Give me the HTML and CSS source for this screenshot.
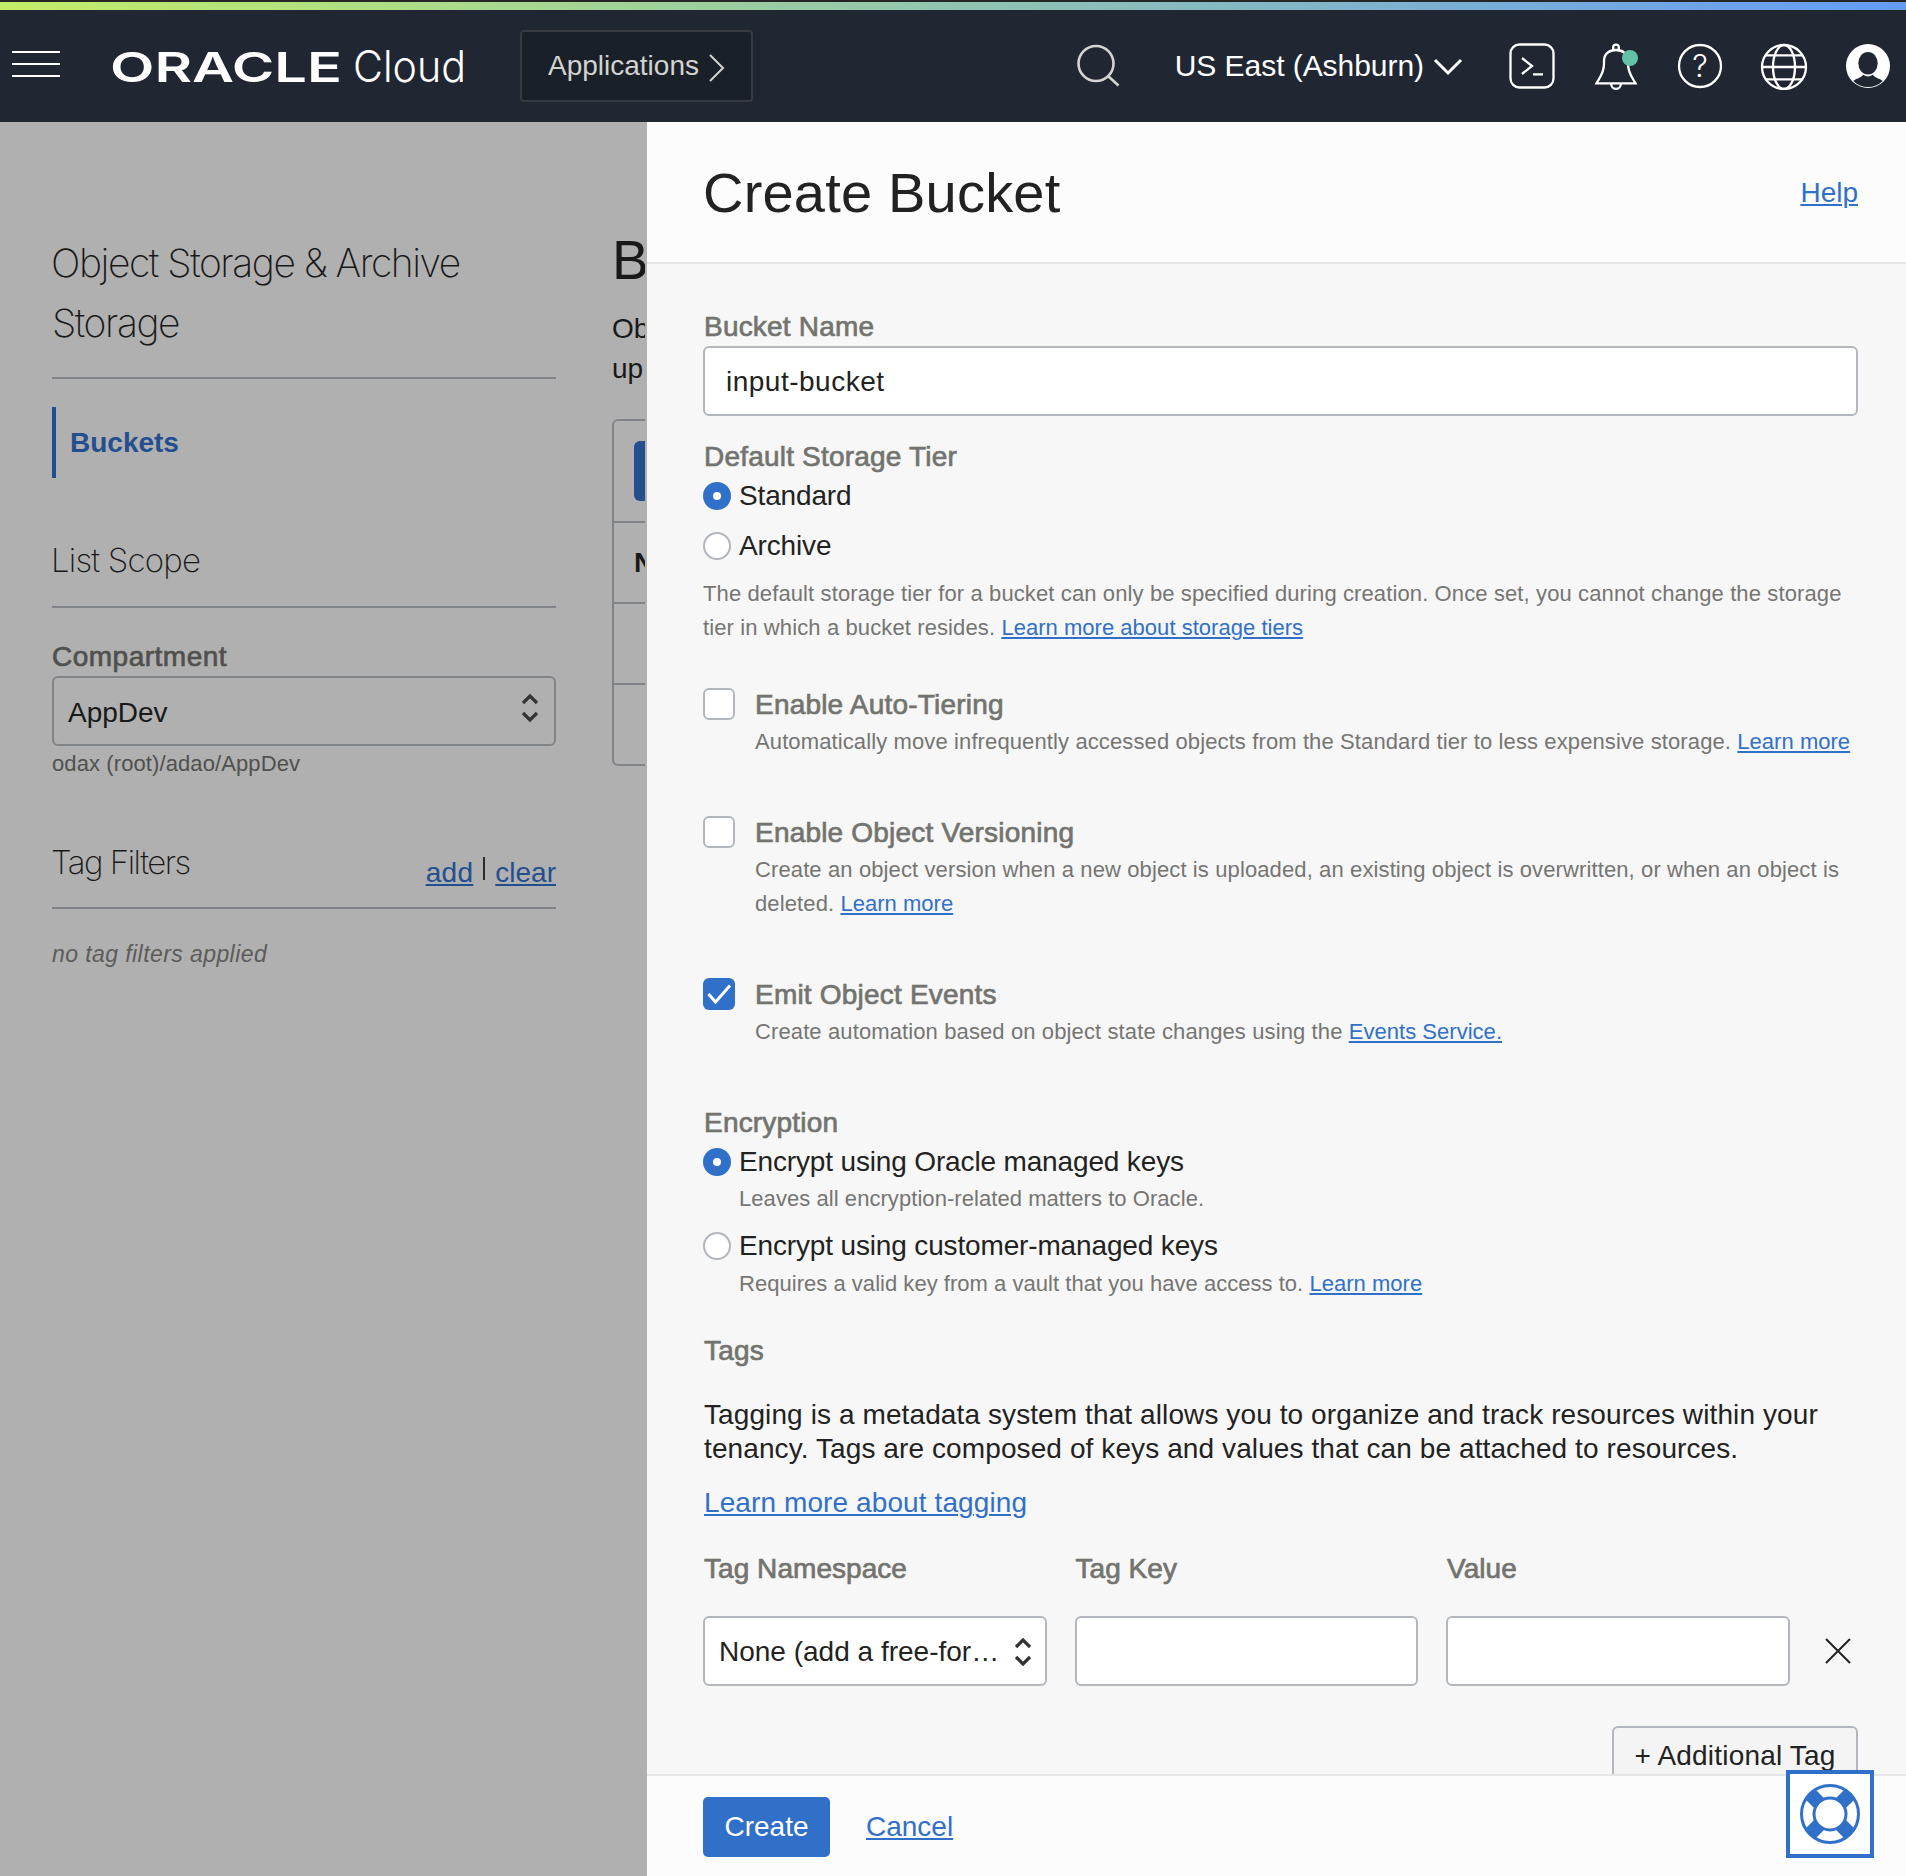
FILE: index.html
```html
<!DOCTYPE html>
<html lang="en">
<head>
<meta charset="utf-8">
<title>Create Bucket</title>
<link rel="stylesheet" href="styles.css">
</head>
<body>
<header class="topbar">
  <svg class="menu" width="48" height="48" viewBox="0 0 48 48"><path d="M0 10h48M0 22h48M0 34h48"/></svg>
  <svg class="logo" width="356" height="48" viewBox="0 0 356 48">
    <text class="logo-oracle" x="-2" y="40" textLength="232" lengthAdjust="spacingAndGlyphs">ORACLE</text>
    <text class="logo-cloud" x="241" y="40" textLength="113" lengthAdjust="spacingAndGlyphs">Cloud</text>
  </svg>
  <button class="apps">Applications<svg width="17" height="30" viewBox="0 0 17 30"><path d="M2 2l13 13L2 28"/></svg></button>
  <div class="tools">
    <svg class="search" width="44" height="48" viewBox="0 0 44 48"><circle cx="19" cy="21.500" r="17.500"/><path d="M31 34l10.500 9.500"/></svg>
    <span class="region">US East (Ashburn)<svg width="30" height="20" viewBox="0 0 30 20"><path d="M2 4l13 13L28 4"/></svg></span>
    <div class="icons">
      <svg width="48" height="48" viewBox="0 0 48 48"><rect x="2.500" y="2.500" width="43" height="43" rx="9"/><path d="M14 16l10 8-10 8M25 32.300h10"/></svg>
      <svg width="48" height="48" viewBox="0 0 48 48"><path d="M4.500 41.300C8 35 12 31 12 22v-3C12 12 17 8 24 8s12 4 12 11v3c0 9 4 13 7.500 19.300zM21.200 8V5.500a2.800 2.800 0 0 1 5.600 0V8M19.200 42a4.800 5 0 0 0 9.600 0"/><circle class="dot" cx="38" cy="16" r="8"/></svg>
      <svg width="48" height="48" viewBox="0 0 48 48"><circle cx="24" cy="24" r="21"/><text class="mark" x="24" y="34.500" text-anchor="middle">?</text></svg>
      <svg width="48" height="48" viewBox="0 0 48 48"><circle cx="24" cy="25" r="22"/><ellipse cx="24" cy="25" rx="11" ry="22"/><path d="M5.500 13.300h37M2 25h44M5.500 37.300h37"/></svg>
      <svg width="48" height="48" viewBox="0 0 48 48"><circle class="face" cx="24" cy="24" r="22"/><ellipse class="cut" cx="24" cy="21.300" rx="9.700" ry="11.300"/><path class="cut" d="M19 32.600c-.5 3-6 3.600-9.700 6.300a20.700 20.700 0 0 0 29.400 0c-3.700-2.700-9.200-3.300-9.700-6.300-2.500 2.400-7.500 2.400-10 0z"/></svg>
    </div>
  </div>
</header>
<main class="page">
  <aside class="sidebar">
    <h2 class="service">Object Storage &amp; Archive Storage</h2>
    <a class="nav-item">Buckets</a>
    <div class="side-head scope"><h3>List Scope</h3></div>
    <label class="label">Compartment</label>
    <div class="field select compartment"><span>AppDev</span><svg width="18" height="30" viewBox="0 0 18 30"><path d="M2 10L9 3l7 7M2 20l7 7 7-7"/></svg></div>
    <p class="hint">odax (root)/adao/AppDev</p>
    <div class="side-head filters"><h3>Tag Filters</h3><div class="side-links"><a class="link">add</a><i class="bar"></i><a class="link">clear</a></div></div>
    <p class="none">no tag filters applied</p>
  </aside>
  <section class="listing">
    <h1>B</h1>
    <p>Ob<br>up</p>
    <div class="table">
      <div class="trow actions"><span class="table-btn"></span></div>
      <div class="trow thead">N</div>
      <div class="trow"></div>
      <div class="trow"></div>
    </div>
  </section>
  <section class="panel">
    <div class="panel-head"><h1>Create Bucket</h1><a class="link">Help</a></div>
    <div class="panel-body">
      <label class="label">Bucket Name</label>
      <div class="field name">input-bucket</div>

      <div class="label tier">Default Storage Tier</div>
      <div class="option"><span class="radio on"></span>Standard</div>
      <div class="option archive"><span class="radio"></span>Archive</div>
      <p class="help tier-help">The default storage tier for a bucket can only be specified during creation. Once set, you cannot change the storage<br>tier in which a bucket resides. <a class="link">Learn more about storage tiers</a></p>

      <div class="check first"><span class="box"></span><div><div class="label">Enable Auto-Tiering</div><p class="help">Automatically move infrequently accessed objects from the Standard tier to less expensive storage. <a class="link">Learn more</a></p></div></div>
      <div class="check"><span class="box"></span><div><div class="label">Enable Object Versioning</div><p class="help">Create an object version when a new object is uploaded, an existing object is overwritten, or when an object is<br>deleted. <a class="link">Learn more</a></p></div></div>
      <div class="check"><span class="box on"><svg width="26" height="24" viewBox="0 0 26 24"><path d="M2.500 12l7 8L24 3.500"/></svg></span><div><div class="label">Emit Object Events</div><p class="help">Create automation based on object state changes using the <a class="link">Events Service.</a></p></div></div>

      <div class="label encryption">Encryption</div>
      <div class="option"><span class="radio on"></span>Encrypt using Oracle managed keys</div>
      <p class="help sub">Leaves all encryption-related matters to Oracle.</p>
      <div class="option customer"><span class="radio"></span>Encrypt using customer-managed keys</div>
      <p class="help sub second">Requires a valid key from a vault that you have access to. <a class="link">Learn more</a></p>

      <div class="label tags">Tags</div>
      <p class="about">Tagging is a metadata system that allows you to organize and track resources within your<br>tenancy. Tags are composed of keys and values that can be attached to resources.</p>
      <div class="more"><a class="link">Learn more about tagging</a></div>
      <div class="tag-grid">
        <div class="label">Tag Namespace</div><div class="label">Tag Key</div><div class="label">Value</div><span></span>
        <div class="field select"><span>None (add a free-for…</span><svg width="18" height="30" viewBox="0 0 18 30"><path d="M2 10L9 3l7 7M2 20l7 7 7-7"/></svg></div>
        <div class="field"></div>
        <div class="field"></div>
        <svg class="remove" width="26" height="26" viewBox="0 0 26 26"><path d="M1 1l24 24M25 1L1 25"/></svg>
      </div>
      <button class="add-tag">+ Additional Tag</button>
    </div>
    <div class="panel-foot"><button class="create">Create</button><a class="link">Cancel</a></div>
  </section>
</main>
<div class="support"><svg width="64" height="64" viewBox="0 0 64 64"><path class="bands" d="M21.500 21.500l-9-9M42.500 21.500l9-9M21.500 42.500l-9 9M42.500 42.500l9 9"/><circle cx="32" cy="32" r="28.500"/><circle class="hole" cx="32" cy="32" r="16"/></svg></div>
</body>
</html>
```
FILE: styles.css
```css
* { box-sizing: border-box; margin: 0; padding: 0; }
body {
  width: 1906px; height: 1876px; overflow: hidden;
  display: flex; flex-direction: column;
  font: 400 28px/34px "Liberation Sans", Arial, sans-serif;
  color: #222; background: #b0b0b0;
}
svg { display: block; flex: none; fill: none; }
button { font: inherit; }
.link { color: #3170c9; text-decoration: underline; text-decoration-thickness: 2px; text-underline-offset: 2px; }

/* top bar */
.topbar {
  flex: none; height: 122px; padding: 10px 14px 0 12px;
  display: flex; align-items: center;
  background:
    linear-gradient(#262626, #262626) 0 0 / 100% 2px no-repeat,
    linear-gradient(90deg, #c2ee68 0%, #98cba5 42%, #7db2cf 73%, #659cf8 100%) 0 2px / 100% 8px no-repeat,
    #202732;
  color: #fff;
}
.menu path { stroke: #fff; stroke-width: 2; }
.logo { margin-left: 52px; overflow: visible; }
.logo text { fill: #fff; }
.logo-oracle { font: 600 41px Inter, sans-serif; }
.logo-cloud { font: 300 43px Inter, sans-serif; }
.apps {
  margin-left: 52px; width: 233px; height: 72px; padding-left: 26px;
  display: flex; align-items: center; gap: 9px;
  color: #d3d3d2; background: #1a2027; border: 2px solid #373b41; border-radius: 4px;
}
.apps svg { margin-top: 4px; }
.apps svg path { stroke: #d3d3d2; stroke-width: 2; }
.tools { margin-left: auto; display: flex; align-items: center; }
.search { stroke: #d5d5d0; stroke-width: 2.6; }
.region { margin-left: 54px; display: flex; align-items: center; gap: 9px; font-size: 30px; letter-spacing: -0.05px; }
.region svg path { stroke: #fff; stroke-width: 3; }
.icons { margin-left: 45px; display: flex; gap: 36px; stroke: #fff; stroke-width: 2.3; }
.dot { fill: #63c1a8; stroke: none; }
.mark { font: 300 31px Inter, sans-serif; fill: #fff; stroke: none; }
.face { fill: #fff; stroke: none; }
.cut { fill: #202732; stroke: none; }

/* dimmed page */
.page { flex: 1; min-height: 0; display: flex; }
.sidebar { flex: none; width: 556px; padding: 111px 0 0 52px; color: #191919; }
.sidebar .link { color: #234f8f; }
.service { font: 200 39px/60px Inter, sans-serif; letter-spacing: -1.45px; padding-bottom: 24px; border-bottom: 2px solid #808489; text-indent: -1px; }
.nav-item {
  margin-top: 28px; height: 71px; display: flex; align-items: center;
  border-left: 4px solid #234f8f; padding: 1px 0 0 14px; color: #234f8f; font-weight: 700;
}
.side-head { display: flex; justify-content: space-between; border-bottom: 2px solid #808489; }
.side-head h3 { font: 200 33px/50px Inter, sans-serif; letter-spacing: -0.8px; text-indent: -1px; }
.scope { margin-top: 57px; height: 73px; }
.filters { margin-top: 56px; height: 72px; }
.filters h3 { letter-spacing: -1.5px; }
.side-links { display: flex; padding-top: 19px; }
.side-links .link:first-child { letter-spacing: .3px; }
.bar { width: 2px; height: 23px; margin: 1px 10px 0; background: #2b2b2b; }
.label { display: block; padding: 1px 0 0 1px; height: 34px; color: #73736f; letter-spacing: .2px; -webkit-text-stroke: .7px currentColor; }
.sidebar .label { margin-top: 31px; padding-left: 0; color: #50504e; letter-spacing: .5px; }
.field {
  height: 70px; display: flex; align-items: center;
  border: 2px solid #b2b7bd; border-radius: 6px; background: #fff; padding: 1px 13px 0 14px;
}
.select { justify-content: space-between; }
.select svg path { stroke: #333; stroke-width: 3.2; }
.compartment { margin-top: 3px; padding: 3px 15px 0 14px; background: #b0b0b0; border-color: #808489; color: #191919; }
.compartment svg { position: relative; top: -5px; }
.hint { margin-top: 1px; font-size: 22px; letter-spacing: .1px; color: #50504e; }
.none { margin-top: 28px; font-size: 23px; letter-spacing: .42px; font-style: italic; color: #5c5c5a; }

.listing { flex: none; width: 89px; margin-right: 2px; padding: 108px 0 0 56px; overflow: hidden; color: #191919; }
.listing h1 { font-weight: 400; font-size: 55px; line-height: 60px; }
.listing p { margin-top: 19px; line-height: 40px; }
.table { width: 1242px; margin-top: 30px; border: 2px solid #808489; border-radius: 6px; }
.trow { height: 81px; padding-left: 20px; border-bottom: 2px solid #808489; display: flex; align-items: center; }
.trow:last-child { height: 79px; border-bottom: 0; }
.actions { height: 102px; }
.thead { font-weight: 700; }
.table-btn { width: 126px; height: 60px; border-radius: 6px; background: #234f8f; }

/* side panel */
.panel { flex: 1; min-width: 0; display: flex; flex-direction: column; background: #f7f7f7; }
.panel-head {
  flex: none; height: 142px; padding: 1px 48px 0 56px;
  display: flex; align-items: center; justify-content: space-between;
  background: #fcfcfc; border-bottom: 2px solid #e6e6e6;
}
.panel-head h1 { font-weight: 400; font-size: 56px; line-height: 60px; letter-spacing: .2px; }
.panel-body { flex: 1; min-height: 0; overflow: hidden; padding: 45px 48px 0 56px; }
.name { margin-top: 3px; padding-left: 21px; letter-spacing: .5px; }
.tier { margin-top: 23px; margin-bottom: 6px; }
.option { display: flex; align-items: center; gap: 8px; height: 34px; letter-spacing: -0.15px; }
.radio { width: 28px; height: 28px; border-radius: 50%; border: 2px solid #b2b7bd; background: #fff; }
.radio.on { border: 10px solid #3170c9; }
.archive { margin-top: 16px; }
.help { font-size: 22px; line-height: 34px; padding-top: 1px; margin-bottom: -1px; letter-spacing: .115px; color: #757573; white-space: nowrap; }
.help .link { letter-spacing: .03px; }
.tier-help { margin-top: 13px; }
.check { display: flex; gap: 20px; margin-top: 57px; }
.check.first { margin-top: 43px; }
.check .label { padding-left: 0; }
.check .help { margin-top: 3px; }
.box { flex: none; width: 32px; height: 32px; margin-top: 1px; border: 2px solid #b2b7bd; border-radius: 6px; background: #fff; }
.box.on { border: 0; background: #3170c9; display: grid; place-items: center; }
.box svg path { stroke: #fff; stroke-width: 3; }
.encryption { margin-top: 57px; margin-bottom: 6px; }
.sub { margin: 2px 0 -1px 36px; letter-spacing: .06px; }
.customer { margin-top: 14px; }
.sub.second { margin-top: 3px; letter-spacing: .03px; }
.tags { margin-top: 33px; }
.about { margin-top: 31px; padding-left: 1px; letter-spacing: .1px; white-space: nowrap; }
.more { margin-top: 20px; padding-left: 1px; letter-spacing: .1px; }
.tag-grid { margin-top: 32px; display: grid; grid-template-columns: repeat(3, 343.5px) 40px; column-gap: 28px; row-gap: 30px; align-items: center; }
.tag-grid .label { padding-top: 0; letter-spacing: .05px; }
.remove { margin-left: 7px; stroke: #222; stroke-width: 2; }
.add-tag {
  display: block; margin: 40px 0 0 auto; width: 246px; height: 60px;
  border: 2px solid #b2b7bd; border-radius: 6px; background: #f4f4f4; color: #222; letter-spacing: .2px;
}
.panel-foot {
  flex: none; height: 102px; padding: 21px 56px 0; display: flex; align-items: flex-start; gap: 36px;
  background: #fcfcfc; border-top: 2px solid #e6e6e6;
}
.create { width: 127px; height: 60px; border: 0; border-radius: 5px; background: #3170c9; color: #fff; }
.panel-foot .link { margin-top: 13px; }

.support {
  position: absolute; left: 1786px; top: 1770px; width: 88px; height: 88px;
  display: grid; place-items: center; background: #fff; border: 4px solid #3170c9;
}
.support svg { stroke: #3170c9; stroke-width: 3; }
.support .bands { stroke-width: 14; }
.support .hole { fill: #fff; }
```
